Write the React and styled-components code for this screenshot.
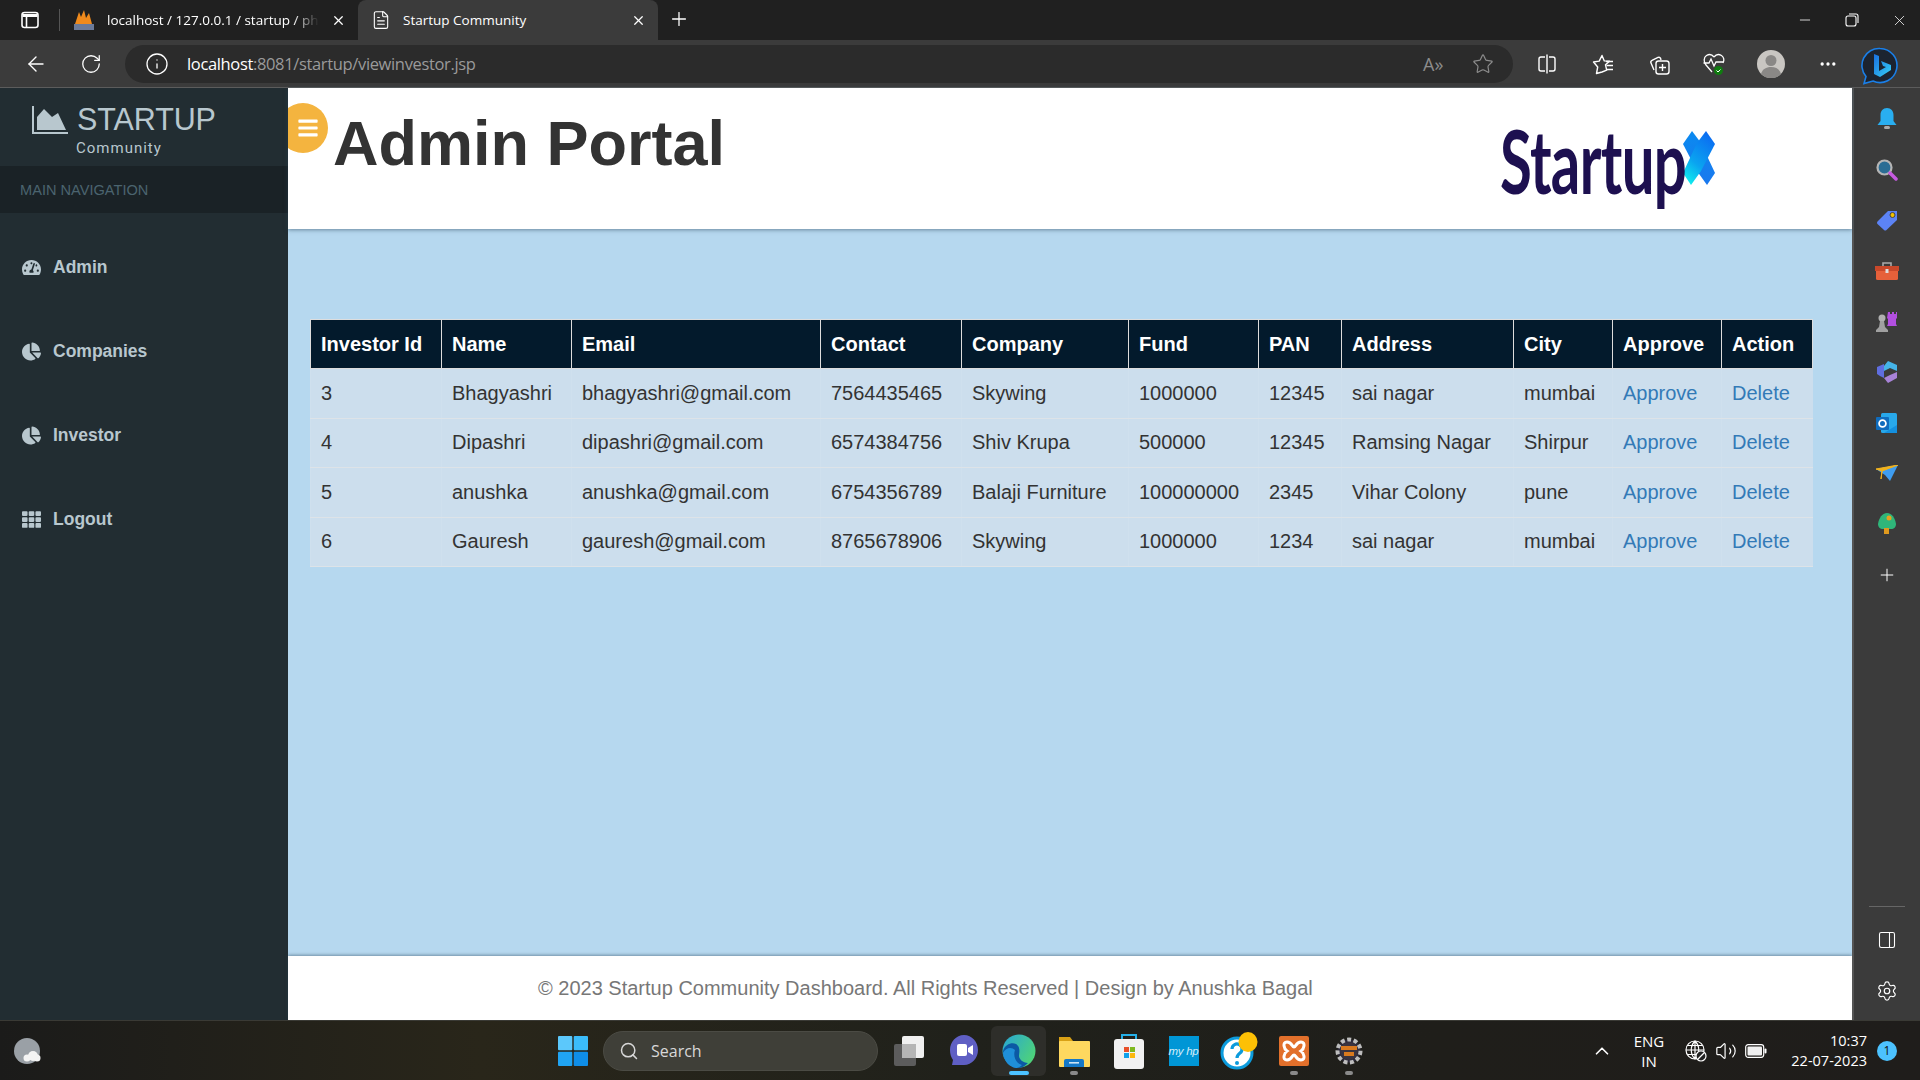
import React from "react";
import styled, { createGlobalStyle } from "styled-components";
import { FaTachometerAlt, FaChartPie, FaTh, FaBars } from "react-icons/fa";
import {
  ArrowLeft,
  RotateCw,
  Info,
  Star,
  X,
  Plus,
  Minus,
  Settings,
  Search,
  ChevronUp,
  Volume2,
  MoreHorizontal,
  FileText,
  PanelRight,
} from "lucide-react";

const GlobalStyle = createGlobalStyle`
  html, body { margin: 0; padding: 0; height: 100%; overflow: hidden; }
  body { font-family: "Liberation Sans", Arial, sans-serif; background: #202020; }
  * { box-sizing: border-box; }
`;

const investors = [
  { id: 3, name: "Bhagyashri", email: "bhagyashri@gmail.com", contact: "7564435465", company: "Skywing", fund: "1000000", pan: "12345", address: "sai nagar", city: "mumbai" },
  { id: 4, name: "Dipashri", email: "dipashri@gmail.com", contact: "6574384756", company: "Shiv Krupa", fund: "500000", pan: "12345", address: "Ramsing Nagar", city: "Shirpur" },
  { id: 5, name: "anushka", email: "anushka@gmail.com", contact: "6754356789", company: "Balaji Furniture", fund: "100000000", pan: "2345", address: "Vihar Colony", city: "pune" },
  { id: 6, name: "Gauresh", email: "gauresh@gmail.com", contact: "8765678906", company: "Skywing", fund: "1000000", pan: "1234", address: "sai nagar", city: "mumbai" },
];

const columns = [
  ["Investor Id", 131],
  ["Name", 130],
  ["Email", 249],
  ["Contact", 141],
  ["Company", 167],
  ["Fund", 130],
  ["PAN", 83],
  ["Address", 172],
  ["City", 99],
  ["Approve", 109],
  ["Action", 91],
];

const Screen = styled.div`
  width: 1920px;
  height: 1080px;
  display: flex;
  flex-direction: column;
  overflow: hidden;
`;

/* browser chrome */
const TabStrip = styled.div`
  height: 40px;
  background: #202020;
  display: flex;
  align-items: stretch;
  color: #fff;
  font-family: "Open Sans", sans-serif;
  font-size: 13.5px;
`;

const StripIcon = styled.div`
  width: 60px;
  display: flex;
  align-items: center;
  justify-content: center;
  border-right: 0;
  position: relative;
  &::after {
    content: "";
    position: absolute;
    right: 0;
    top: 9px;
    height: 22px;
    width: 1px;
    background: #555;
  }
`;

const Tab = styled.div`
  width: ${(p) => p.$w}px;
  display: flex;
  align-items: center;
  padding: 0 12px 0 ${(p) => p.$pad}px;
  gap: 12px;
  background: ${(p) => (p.$active ? "#3b3b3b" : "transparent")};
  border-radius: 8px 8px 0 0;
`;

const TabTitle = styled.span`
  flex: 1;
  white-space: nowrap;
  overflow: hidden;
  mask-image: ${(p) => (p.$fade ? "linear-gradient(90deg, #000 88%, transparent)" : "none")};
`;

const WindowButtons = styled.div`
  margin-left: auto;
  display: flex;
  align-items: center;
  padding-right: 12px;
  gap: 32px;
`;

const Toolbar = styled.div`
  height: 48px;
  background: #3b3b3b;
  border-bottom: 1px solid #5c5c5c;
  display: flex;
  align-items: center;
  padding-left: 8px;
  color: #fff;
`;

const ToolBtn = styled.div`
  width: ${(p) => p.$w || 55}px;
  height: 38px;
  flex: none;
  display: flex;
  align-items: center;
  justify-content: center;
`;

const AddressBar = styled.div`
  width: 1388px;
  height: 38px;
  margin: 0 6px 0 7px;
  border-radius: 19px;
  background: #2b2b2b;
  display: flex;
  align-items: center;
  padding-left: 20px;
  gap: 18px;
`;

const Url = styled.div`
  flex: 1;
  font-family: "Open Sans", sans-serif;
  font-size: 16.5px;
  letter-spacing: -0.35px;
  color: #9a9a9a;
  b {
    font-weight: 400;
    color: #fff;
  }
`;

const AddressEnd = styled.div`
  display: flex;
  align-items: center;
  gap: 24px;
  padding-right: 19px;
  color: #8c8c8c;
`;

const ReadAloud = styled.span`
  font-family: "Open Sans", sans-serif;
  font-size: 18px;
  color: #8c8c8c;
  width: 25px;
`;

/* page */
const Viewport = styled.div`
  flex: 1;
  display: flex;
  min-height: 0;
`;

const Sidebar = styled.aside`
  width: 288px;
  flex: none;
  background: #222d32;
  color: #b8c7ce;
`;

const Brand = styled.div`
  height: 78px;
  padding: 15px 0 0 32px;
  display: grid;
  grid-template-columns: 45px auto;
  grid-template-rows: 32px 18px;
  justify-content: start;
`;

const BrandName = styled.div`
  font-size: 30.5px;
  line-height: 32px;
  letter-spacing: -0.1px;
`;

const BrandSub = styled.div`
  grid-column: 2;
  font-family: "Roboto", sans-serif;
  font-size: 15px;
  letter-spacing: 1px;
  line-height: 18px;
  padding-top: 4px;
  margin-left: -1px;
`;

const NavHeading = styled.div`
  height: 47px;
  background: #1a2226;
  color: #4b646f;
  font-size: 14.6px;
  padding-left: 20px;
  display: flex;
  align-items: center;
`;

const NavList = styled.nav`
  padding-top: 12px;
`;

const NavItem = styled.a`
  height: 84px;
  display: flex;
  align-items: center;
  gap: 12px;
  padding-left: 22px;
  font-size: 17.5px;
  font-weight: 700;
  color: #b8c7ce;
  svg {
    width: 19px;
    height: 19px;
    flex: none;
  }
`;

const Main = styled.main`
  flex: 1;
  display: flex;
  flex-direction: column;
  background: #b6d8ef;
  min-width: 0;
`;

const TopBar = styled.header`
  height: 141px;
  flex: none;
  background: #fff;
  box-shadow: 0 1px 4px rgba(40, 70, 90, 0.55);
  position: relative;
  overflow: hidden;
  display: flex;
  justify-content: space-between;
  padding: 19px 137px 0 45px;
`;

const MenuToggle = styled.div`
  position: absolute;
  left: -10px;
  top: 15px;
  width: 50px;
  height: 50px;
  border-radius: 50%;
  background: #f4b43f;
  color: #fff;
  display: flex;
  align-items: center;
  justify-content: center;
  padding-left: 10px;
  svg {
    width: 20px;
    height: 22px;
  }
`;

const Title = styled.h1`
  margin: 0;
  font-size: 63px;
  font-weight: 700;
  line-height: 72px;
  color: #333;
`;

const Logo = styled.div`
  display: flex;
  width: 215px;
  height: 110px;
  padding-top: 5px;
`;

const LogoWord = styled.div`
  width: 183px;
  font-family: "Lato", sans-serif;
  font-weight: 700;
  font-size: 88px;
  line-height: 96px;
  color: #1d1050;
  transform: scaleX(0.66);
  transform-origin: left top;
  white-space: nowrap;
  letter-spacing: -1px;
`;

const Content = styled.section`
  flex: 1;
  padding: 90px 40px 0 22px;
`;

const Table = styled.table`
  width: 1502px;
  table-layout: fixed;
  border-collapse: collapse;
  font-size: 20px;
  color: #333;
`;

const Th = styled.th`
  height: 49px;
  padding: 0 10px;
  background: #031a2c;
  color: #fff;
  font-weight: 700;
  text-align: left;
  border: 1px solid #ddd;
  white-space: nowrap;
`;

const Td = styled.td`
  height: 49.5px;
  padding: 0 10px;
  background: #ccdeed;
  border-top: 1px solid #dde3e8;
  border-bottom: 1px solid #dde3e8;
  border-left: 1px solid #cfe0ee;
  white-space: nowrap;
`;

const Link = styled.a`
  color: #337ab7;
`;

const Footer = styled.footer`
  height: 64px;
  flex: none;
  background: #fff;
  box-shadow: 0 -1px 3px rgba(40, 70, 90, 0.5);
  padding-left: 250px;
  display: flex;
  align-items: center;
  font-size: 20px;
  color: #777;
`;

const SidePanel = styled.aside`
  width: 68px;
  flex: none;
  background: #3b3b3b;
  border-left: 2px solid #555;
  display: flex;
  flex-direction: column;
  align-items: center;
  padding-top: 6px;
  color: #fff;
`;

const PanelIcon = styled.div`
  height: 50.6px;
  display: flex;
  align-items: center;
  justify-content: center;
  flex: none;
`;

const PanelFoot = styled.div`
  margin-top: auto;
  width: 100%;
  display: flex;
  flex-direction: column;
  align-items: center;
  padding-bottom: 4px;
  &::before {
    content: "";
    width: 36px;
    height: 1px;
    background: #666;
    margin-bottom: 8px;
  }
`;

/* taskbar */
const Taskbar = styled.div`
  height: 60px;
  flex: none;
  background: linear-gradient(90deg, #1b1b1a 0%, #29261a 25%, #20211b 50%, #1f1e1a 75%, #1f1d1b 100%);
  border-top: 1px solid #3a3a35;
  display: flex;
  align-items: center;
  color: #fff;
`;

const Weather = styled.div`
  width: 558px;
  padding-left: 14px;
  display: flex;
`;

const SearchPill = styled.div`
  width: 275px;
  height: 40px;
  margin: 0 3px 0 15px;
  border-radius: 20px;
  background: #3f3f38;
  border: 1px solid #4b4b44;
  display: flex;
  align-items: center;
  gap: 12px;
  padding-left: 15px;
  font-family: "Open Sans", sans-serif;
  font-size: 16px;
  color: #d8d8d8;
`;

const TaskApp = styled.div`
  width: 55px;
  height: 50px;
  display: flex;
  align-items: center;
  justify-content: center;
  position: relative;
  border-radius: 6px;
  background: ${(p) => (p.$active ? "#2e2e2a" : "transparent")};
  &::after {
    content: "";
    display: ${(p) => (p.$dot ? "block" : "none")};
    position: absolute;
    bottom: 1px;
    left: 50%;
    transform: translateX(-50%);
    width: ${(p) => (p.$active ? 20 : 8)}px;
    height: 4px;
    border-radius: 2px;
    background: ${(p) => (p.$active ? "#4cc2ff" : "#8a8a8a")};
  }
`;

const Tray = styled.div`
  flex: 1;
  display: flex;
  align-items: center;
  font-family: "Open Sans", sans-serif;
  font-size: 15px;
  padding-left: 215px;
`;

const Lang = styled.div`
  width: 60px;
  margin-left: 6px;
  text-align: center;
  line-height: 20px;
  font-size: 15px;
`;

const TrayIcons = styled.div`
  display: flex;
  align-items: center;
  gap: 8px;
  margin-left: 6px;
`;

const Clock = styled.div`
  width: 100px;
  margin-left: 0;
  text-align: right;
  line-height: 20px;
  font-size: 14.5px;
`;

const Badge = styled.div`
  width: 20px;
  height: 20px;
  margin-left: 10px;
  border-radius: 50%;
  background: #4cc2ff;
  color: #111;
  font-size: 12px;
  display: flex;
  align-items: center;
  justify-content: center;
`;

/* drawings */
const ChartLogo = () => (
  <svg width="36" height="30" viewBox="0 0 36 30" style={{ marginTop: 2 }}>
    <path d="M1 1v27h35" fill="none" stroke="#b8c7ce" strokeWidth="2" />
    <path d="M5 25V12l7-8 8 8 6-4 8 17z" fill="#b8c7ce" />
  </svg>
);

const StartupMark = () => (
  <svg width="32" height="54" viewBox="0 0 32 54" style={{ marginTop: 19, flex: "none" }}>
    <defs>
      <linearGradient id="markA" x1="0" y1="0" x2="0" y2="1">
        <stop offset="0" stopColor="#0a8af0" />
        <stop offset="1" stopColor="#1a78ee" />
      </linearGradient>
      <linearGradient id="markB" x1="0.7" y1="0" x2="0.2" y2="1">
        <stop offset="0" stopColor="#0b6cf2" />
        <stop offset="0.6" stopColor="#0aa4f0" />
        <stop offset="1" stopColor="#0ff0ee" />
      </linearGradient>
    </defs>
    <path d="M9 0l9 12 14 30-8 12-10-14L0 13z" fill="url(#markA)" />
    <path d="M23 0l9 13-14 27L8 54 0 42l14-30z" fill="url(#markB)" />
  </svg>
);

const PmaIcon = () => (
  <svg width="22" height="22" viewBox="0 0 22 22">
    <path d="M2 15L6 3l2 5 3-7 2 8 3-5 3 11z" fill="#f08a1c" />
    <rect x="1" y="15" width="20" height="6" fill="#6b7a99" />
  </svg>
);

const TabsIcon = () => (
  <svg width="20" height="20" viewBox="0 0 20 20" fill="none" stroke="#fff" strokeWidth="1.6">
    <rect x="2" y="2.5" width="16" height="15" rx="2.5" />
    <path d="M2.5 5.5h15" strokeWidth="3" />
    <path d="M6.5 5v12" />
  </svg>
);

const RestoreIcon = () => (
  <svg width="14" height="14" viewBox="0 0 14 14" fill="none" stroke="#fff" strokeWidth="1.1">
    <rect x="1" y="3" width="10" height="10" rx="2" />
    <path d="M4 1h7a2 2 0 0 1 2 2v7" />
  </svg>
);

const SplitIcon = () => (
  <svg width="22" height="22" viewBox="0 0 22 22" fill="none" stroke="#fff" strokeWidth="1.4">
    <path d="M9 4H5a2 2 0 0 0-2 2v10a2 2 0 0 0 2 2h4M13 4h4a2 2 0 0 1 2 2v10a2 2 0 0 1-2 2h-4M11 1.5v19" />
  </svg>
);

const FavsIcon = () => (
  <svg width="22" height="22" viewBox="0 0 22 22" fill="none" stroke="#fff" strokeWidth="1.4">
    <path d="M10 2.5l2.3 5.4 5.2.4-4 3.5 1.2 5.4L10 19l-5.5 1.5 1.2-6.5L1.5 9l5.7-.9z" strokeLinejoin="round" />
    <path d="M14 8.5h7M14.5 12.5h6.5M14.5 16.5h6.5" />
  </svg>
);

const CollectionsIcon = () => (
  <svg width="22" height="22" viewBox="0 0 22 22" fill="none" stroke="#fff" strokeWidth="1.4">
    <path d="M6 17l-3-7a2 2 0 0 1 1-2.6l6-3a2 2 0 0 1 2.6 1L13 7" />
    <rect x="8" y="8" width="13" height="13" rx="2.5" />
    <path d="M14.5 11v7M11 14.5h7" />
  </svg>
);

const HealthIcon = () => (
  <svg width="24" height="24" viewBox="0 0 24 24" fill="none" stroke="#fff" strokeWidth="1.3">
    <path d="M12 5c-2-2.600-5-3-7.500-1.500C1.500 5.500 1.500 10 4 13l6 7" />
    <path d="M12 5c2-2.600 5-3 7.500-1.500 2.500 1.600 3 5 1.500 7.500" />
    <path d="M1.500 11H7l2-4 3 7 2-4h7" />
    <circle cx="16.500" cy="18.500" r="4.500" fill="#107c10" stroke="none" />
    <path d="M14.500 18.500l1.500 1.500 2.500-2.500" strokeWidth="1" />
  </svg>
);

const Avatar = () => (
  <svg width="28" height="28" viewBox="0 0 28 28">
    <circle cx="14" cy="14" r="14" fill="#c9c6c2" />
    <circle cx="14" cy="10.500" r="5.500" fill="#8a8886" />
    <path d="M4 24c1.500-5 5-7 10-7s8.500 2 10 7a14 14 0 0 1-20 0z" fill="#8a8886" />
  </svg>
);

const BingButton = () => (
  <svg width="38" height="38" viewBox="0 0 38 38" style={{ marginLeft: 4, marginTop: 4, flex: "none" }}>
    <defs>
      <linearGradient id="bingB" x1="0" y1="0" x2="1" y2="1">
        <stop offset="0" stopColor="#1a6fe0" />
        <stop offset="1" stopColor="#35d0f5" />
      </linearGradient>
    </defs>
    <path d="M19 1.500a17 17 0 1 1-7 32.500l-9 2.500 2-7A17 17 0 0 1 19 1.500z" fill="#1c2430" stroke="#1a7fe8" strokeWidth="1.600" />
    <path d="M13 7l5 2v15l7-4-3-1-2-5 10 4v5l-11 7-6-3z" fill="url(#bingB)" />
  </svg>
);

const Bell = () => (
  <svg width="20" height="24" viewBox="0 0 20 24">
    <path d="M10 1c4 0 6.500 3 6.500 7v6l3 4H.5l3-4V8c0-4 2.500-7 6.500-7z" fill="#29aef0" />
    <rect x="7" y="19" width="6" height="3" rx="1.500" fill="#aaa" />
  </svg>
);

const Magnifier = () => (
  <svg width="22" height="22" viewBox="0 0 22 22">
    <circle cx="8.500" cy="8.500" r="7" fill="#2b6d94" stroke="#b5b5b5" strokeWidth="2.200" />
    <path d="M14 14l6 6" stroke="#c65be0" strokeWidth="3.500" strokeLinecap="round" />
  </svg>
);

const TagIcon = () => (
  <svg width="22" height="22" viewBox="0 0 22 22">
    <path d="M1.500 12.500L12 2h9v9L10.500 21a2 2 0 0 1-2.500 0l-6.500-6a2 2 0 0 1 0-2.500z" fill="#5c83f5" />
    <circle cx="16.500" cy="6" r="2.500" fill="#f2c200" stroke="#444" strokeWidth="1" />
  </svg>
);

const Toolbox = () => (
  <svg width="24" height="20" viewBox="0 0 24 20">
    <path d="M8 5V2h8v3" fill="none" stroke="#aaa" strokeWidth="1.600" />
    <rect x="1" y="5" width="22" height="14" rx="1.500" fill="#e6603a" />
    <rect x="0" y="5" width="24" height="5" fill="#c9482a" />
    <rect x="10.500" y="8" width="3" height="4" fill="#ddd" />
  </svg>
);

const Chess = () => (
  <svg width="24" height="22" viewBox="0 0 24 22">
    <path d="M14 1h2v2h2V1h2v2h2V1h1v6l-1 1v5l1 2H13l1-2V8l-1-1z" fill="#b24fe0" transform="translate(-1 0)" />
    <circle cx="7" cy="7" r="3.500" fill="#b0b0b0" />
    <path d="M5 10h4l1 6 3 3v2H1v-2l3-3z" fill="#a0a0a0" />
  </svg>
);

const Office = () => (
  <svg width="22" height="24" viewBox="0 0 22 24">
    <path d="M12 1l9 4v6l-7-3-6 3V6z" fill="#45b4e8" />
    <path d="M1 7l7-3v14l-4-2-3-2z" fill="#5f6ee0" />
    <path d="M8 18l6-3 7-3v6l-9 5z" fill="#a883d8" />
  </svg>
);

const Outlook = () => (
  <svg width="22" height="22" viewBox="0 0 22 22">
    <rect x="5" y="1" width="16" height="20" rx="1.500" fill="#28a8ea" />
    <path d="M8 21l13-8v8z" fill="#1490df" />
    <rect x="0" y="5" width="13" height="13" rx="1" fill="#0f6cbd" />
    <circle cx="6.500" cy="11.500" r="3.400" fill="none" stroke="#fff" strokeWidth="1.800" />
  </svg>
);

const Plane = () => (
  <svg width="22" height="16" viewBox="0 0 22 16">
    <path d="M0 4l22-4-8 16-5-6z" fill="#3f9df0" />
    <path d="M0 4l22-4L6 6l-1 8 1-8z" fill="#f2b21b" stroke="#f2b21b" strokeWidth="1" />
  </svg>
);

const Tree = () => (
  <svg width="18" height="22" viewBox="0 0 18 22">
    <path d="M9 0c5 0 8 5 9 11 0 3-2 5-5 5H5c-3 0-5-2-5-5 1-6 4-11 9-11z" fill="#2fb67a" />
    <rect x="6" y="15" width="5" height="6" fill="#e09a1e" />
    <circle cx="11" cy="5" r="2.500" fill="#e8a21f" />
  </svg>
);

const CloudWeather = () => (
  <svg width="28" height="28" viewBox="0 0 28 28">
    <ellipse cx="13" cy="14" rx="13" ry="13" fill="#9aa0a6" />
    <circle cx="19" cy="19" r="5" fill="#f4f4f4" />
    <circle cx="13" cy="21" r="3.500" fill="#f4f4f4" />
    <circle cx="23" cy="21" r="3.500" fill="#f4f4f4" />
  </svg>
);

const WindowsLogo = () => (
  <svg width="30" height="30" viewBox="0 0 30 30" style={{ flex: "none" }}>
    <rect x="0" y="0" width="14.300" height="14.300" rx="1" fill="#5cc8fb" />
    <rect x="15.700" y="0" width="14.300" height="14.300" rx="1" fill="#3bbcfa" />
    <rect x="0" y="15.700" width="14.300" height="14.300" rx="1" fill="#20a4f3" />
    <rect x="15.700" y="15.700" width="14.300" height="14.300" rx="1" fill="#0f8ee8" />
  </svg>
);

const TaskView = () => (
  <svg width="32" height="32" viewBox="0 0 32 32">
    <rect x="1" y="9" width="22" height="22" rx="2" fill="#5c5c5c" />
    <rect x="9" y="1" width="22" height="22" rx="2" fill="#f0f0f0" />
    <rect x="9" y="9" width="14" height="14" fill="#b5b5b5" />
  </svg>
);

const Meet = () => (
  <svg width="30" height="34" viewBox="0 0 30 34">
    <path d="M15 1c8 0 14 7 14 15s-6 15-14 15H3l1-5C2 23 1 20 1 16 1 8 7 1 15 1z" fill="#5f5fc4" />
    <rect x="8" y="10" width="10" height="12" rx="2" fill="#fff" />
    <path d="M19 14l5-3v10l-5-3z" fill="#fff" />
  </svg>
);

const EdgeLogo = () => (
  <svg width="34" height="36" viewBox="0 0 34 36">
    <defs>
      <linearGradient id="edgeTop" x1="0" y1="0" x2="1" y2="0.6">
        <stop offset="0" stopColor="#27a5d8" />
        <stop offset="1" stopColor="#4ed27a" />
      </linearGradient>
    </defs>
    <circle cx="17" cy="18" r="16.500" fill="url(#edgeTop)" />
    <path d="M1 18c2-7 9-9 13-7 5 3 3 9 3 12s4 7 9 7c-3 3-6 5-10 5C8 35 1 27 1 18z" fill="#0c59a4" />
    <path d="M1 20c3-6 9-6 12-3-2 5 0 13 7 15-2 2-4 3-6 3C7 34 2 28 1 20z" fill="#1f8fd8" />
  </svg>
);

const Folder = () => (
  <svg width="32" height="34" viewBox="0 0 32 34">
    <path d="M1 3h11l3 4h16v5H1z" fill="#d9a116" />
    <rect x="1" y="7" width="31" height="26" rx="1" fill="#fed85f" />
    <path d="M6 33v-6a2 2 0 0 1 2-2h16a2 2 0 0 1 2 2v6z" fill="#1578c7" />
    <rect x="11" y="28" width="10" height="1.600" fill="#cde4f5" />
  </svg>
);

const StoreBag = () => (
  <svg width="30" height="36" viewBox="0 0 30 36">
    <path d="M8 8V2h14v6" fill="none" stroke="#25b0e8" strokeWidth="2" />
    <rect x="0" y="6" width="30" height="30" rx="3" fill="#f1f1f1" />
    <rect x="10" y="14" width="5" height="5" fill="#e8502a" />
    <rect x="16" y="14" width="5" height="5" fill="#7eb81f" />
    <rect x="10" y="20" width="5" height="5" fill="#10a0ea" />
    <rect x="16" y="20" width="5" height="5" fill="#fbb80e" />
  </svg>
);

const MyHpTile = styled.div`
  width: 30px;
  height: 30px;
  background: #0096d6;
  color: #d4eef9;
  font-family: "Liberation Sans", sans-serif;
  font-size: 11.500px;
  font-style: italic;
  display: flex;
  align-items: center;
  justify-content: center;
  letter-spacing: -0.300px;
`;

const HelpIcon = () => (
  <svg width="38" height="38" viewBox="0 0 38 38">
    <circle cx="17" cy="21" r="15" fill="#fff" stroke="#0c9bdc" strokeWidth="3" />
    <path d="M12 17a5 5 0 1 1 8 4c-2 1.500-3 2.500-3 5" fill="none" stroke="#0c9bdc" strokeWidth="3.200" />
    <circle cx="17" cy="31" r="2" fill="#0c9bdc" />
    <ellipse cx="28" cy="10" rx="9.500" ry="10" fill="#fdc005" />
  </svg>
);

const Xampp = () => (
  <svg width="30" height="30" viewBox="0 0 30 30">
    <rect width="30" height="30" rx="2" fill="#e2702b" />
    <path d="M8 6c5 0 5 5 7 5s2-5 7-5 3 7 0 9c3 2 5 9 0 9s-5-5-7-5-2 5-7 5-3-7 0-9c-3-2-5-9 0-9z" fill="none" stroke="#fff" strokeWidth="3" />
  </svg>
);

const JavaGear = () => (
  <svg width="32" height="32" viewBox="0 0 32 32">
    <circle cx="16" cy="16" r="11.500" fill="#2d2a3a" stroke="#bdbdbd" strokeWidth="4" strokeDasharray="4 2.500" />
    <circle cx="16" cy="16" r="9" fill="#3a3340" />
    <rect x="8" y="11" width="16" height="4" fill="#d9791f" />
    <rect x="11" y="17" width="10" height="4" fill="#d9791f" />
  </svg>
);

const GlobeOff = () => (
  <svg width="22" height="22" viewBox="0 0 22 22" fill="none" stroke="#fff" strokeWidth="1.200">
    <circle cx="10" cy="10" r="9" />
    <path d="M1 10h18M10 1v18M10 1c-5 5-5 13 0 18M10 1c5 5 5 13 0 18M2.500 5.500h15M2.500 14.500h15" />
    <circle cx="16" cy="16" r="5" fill="#222" />
    <path d="M13 19l6-6" />
  </svg>
);

const Battery = () => (
  <svg width="22" height="14" viewBox="0 0 22 14">
    <rect x="0.700" y="0.700" width="18" height="12.600" rx="2.500" fill="none" stroke="#fff" strokeWidth="1.200" />
    <rect x="2.500" y="2.500" width="14.500" height="9" rx="1" fill="#f0f0f0" />
    <rect x="19.500" y="4.500" width="2" height="5" rx="1" fill="#fff" />
  </svg>
);

const panelIcons = [Bell, Magnifier, TagIcon, Toolbox, Chess, Office, Outlook, Plane, Tree];

export default function App() {
  return (
    <Screen>
      <GlobalStyle />
      <TabStrip>
        <StripIcon>
          <TabsIcon />
        </StripIcon>
        <Tab $w={298} $pad={13}>
          <PmaIcon />
          <TabTitle $fade>localhost / 127.0.0.1 / startup / phpMyAdmin</TabTitle>
          <X size={15} />
        </Tab>
        <Tab $active $w={300} $pad={13}>
          <FileText size={20} strokeWidth={1.3} />
          <TabTitle>Startup Community</TabTitle>
          <X size={15} />
        </Tab>
        <ToolBtn $w={42}>
          <Plus size={22} strokeWidth={1.4} />
        </ToolBtn>
        <WindowButtons>
          <Minus size={16} strokeWidth={1.2} />
          <RestoreIcon />
          <X size={17} strokeWidth={1.1} />
        </WindowButtons>
      </TabStrip>

      <Toolbar>
        <ToolBtn>
          <ArrowLeft size={24} strokeWidth={1.4} />
        </ToolBtn>
        <ToolBtn>
          <RotateCw size={22} strokeWidth={1.4} />
        </ToolBtn>
        <AddressBar>
          <Info size={24} strokeWidth={1.3} />
          <Url>
            <b>localhost</b>:8081/startup/viewinvestor.jsp
          </Url>
          <AddressEnd>
            <ReadAloud>A»</ReadAloud>
            <Star size={22} strokeWidth={1.3} />
          </AddressEnd>
        </AddressBar>
        <ToolBtn $w={56}>
          <SplitIcon />
        </ToolBtn>
        <ToolBtn $w={56}>
          <FavsIcon />
        </ToolBtn>
        <ToolBtn $w={55}>
          <CollectionsIcon />
        </ToolBtn>
        <ToolBtn $w={56}>
          <HealthIcon />
        </ToolBtn>
        <ToolBtn $w={57}>
          <Avatar />
        </ToolBtn>
        <ToolBtn $w={58}>
          <MoreHorizontal size={20} />
        </ToolBtn>
        <BingButton />
      </Toolbar>

      <Viewport>
        <Sidebar>
          <Brand>
            <ChartLogo />
            <BrandName>STARTUP</BrandName>
            <BrandSub>Community</BrandSub>
          </Brand>
          <NavHeading>MAIN NAVIGATION</NavHeading>
          <NavList>
            <NavItem>
              <FaTachometerAlt />
              Admin
            </NavItem>
            <NavItem>
              <FaChartPie />
              Companies
            </NavItem>
            <NavItem>
              <FaChartPie />
              Investor
            </NavItem>
            <NavItem>
              <FaTh />
              Logout
            </NavItem>
          </NavList>
        </Sidebar>

        <Main>
          <TopBar>
            <MenuToggle>
              <FaBars />
            </MenuToggle>
            <Title>Admin Portal</Title>
            <Logo>
              <LogoWord>Startup</LogoWord>
              <StartupMark />
            </Logo>
          </TopBar>
          <Content>
            <Table>
              <colgroup>
                {columns.map(([label, width]) => (
                  <col key={label} width={width} />
                ))}
              </colgroup>
              <thead>
                <tr>
                  {columns.map(([label]) => (
                    <Th key={label}>{label}</Th>
                  ))}
                </tr>
              </thead>
              <tbody>
                {investors.map((row) => (
                  <tr key={row.id}>
                    <Td>{row.id}</Td>
                    <Td>{row.name}</Td>
                    <Td>{row.email}</Td>
                    <Td>{row.contact}</Td>
                    <Td>{row.company}</Td>
                    <Td>{row.fund}</Td>
                    <Td>{row.pan}</Td>
                    <Td>{row.address}</Td>
                    <Td>{row.city}</Td>
                    <Td>
                      <Link>Approve</Link>
                    </Td>
                    <Td>
                      <Link>Delete</Link>
                    </Td>
                  </tr>
                ))}
              </tbody>
            </Table>
          </Content>
          <Footer>© 2023 Startup Community Dashboard. All Rights Reserved | Design by Anushka Bagal</Footer>
        </Main>

        <SidePanel>
          {panelIcons.map((Icon, i) => (
            <PanelIcon key={i}>
              <Icon />
            </PanelIcon>
          ))}
          <PanelIcon>
            <Plus size={20} strokeWidth={1.2} />
          </PanelIcon>
          <PanelFoot>
            <PanelIcon>
              <PanelRight size={20} strokeWidth={1.3} />
            </PanelIcon>
            <PanelIcon>
              <Settings size={22} strokeWidth={1.3} />
            </PanelIcon>
          </PanelFoot>
        </SidePanel>
      </Viewport>

      <Taskbar>
        <Weather>
          <CloudWeather />
        </Weather>
        <WindowsLogo />
        <SearchPill>
          <Search size={20} strokeWidth={1.8} />
          Search
        </SearchPill>
        <TaskApp>
          <TaskView />
        </TaskApp>
        <TaskApp>
          <Meet />
        </TaskApp>
        <TaskApp $active $dot>
          <EdgeLogo />
        </TaskApp>
        <TaskApp $dot>
          <Folder />
        </TaskApp>
        <TaskApp>
          <StoreBag />
        </TaskApp>
        <TaskApp>
          <MyHpTile>my hp</MyHpTile>
        </TaskApp>
        <TaskApp>
          <HelpIcon />
        </TaskApp>
        <TaskApp $dot>
          <Xampp />
        </TaskApp>
        <TaskApp $dot>
          <JavaGear />
        </TaskApp>
        <Tray>
          <ChevronUp size={22} strokeWidth={1.8} />
          <Lang>
            ENG
            <br />
            IN
          </Lang>
          <TrayIcons>
            <GlobeOff />
            <Volume2 size={22} strokeWidth={1.3} />
            <Battery />
          </TrayIcons>
          <Clock>
            10:37
            <br />
            22-07-2023
          </Clock>
          <Badge>1</Badge>
        </Tray>
      </Taskbar>
    </Screen>
  );
}
